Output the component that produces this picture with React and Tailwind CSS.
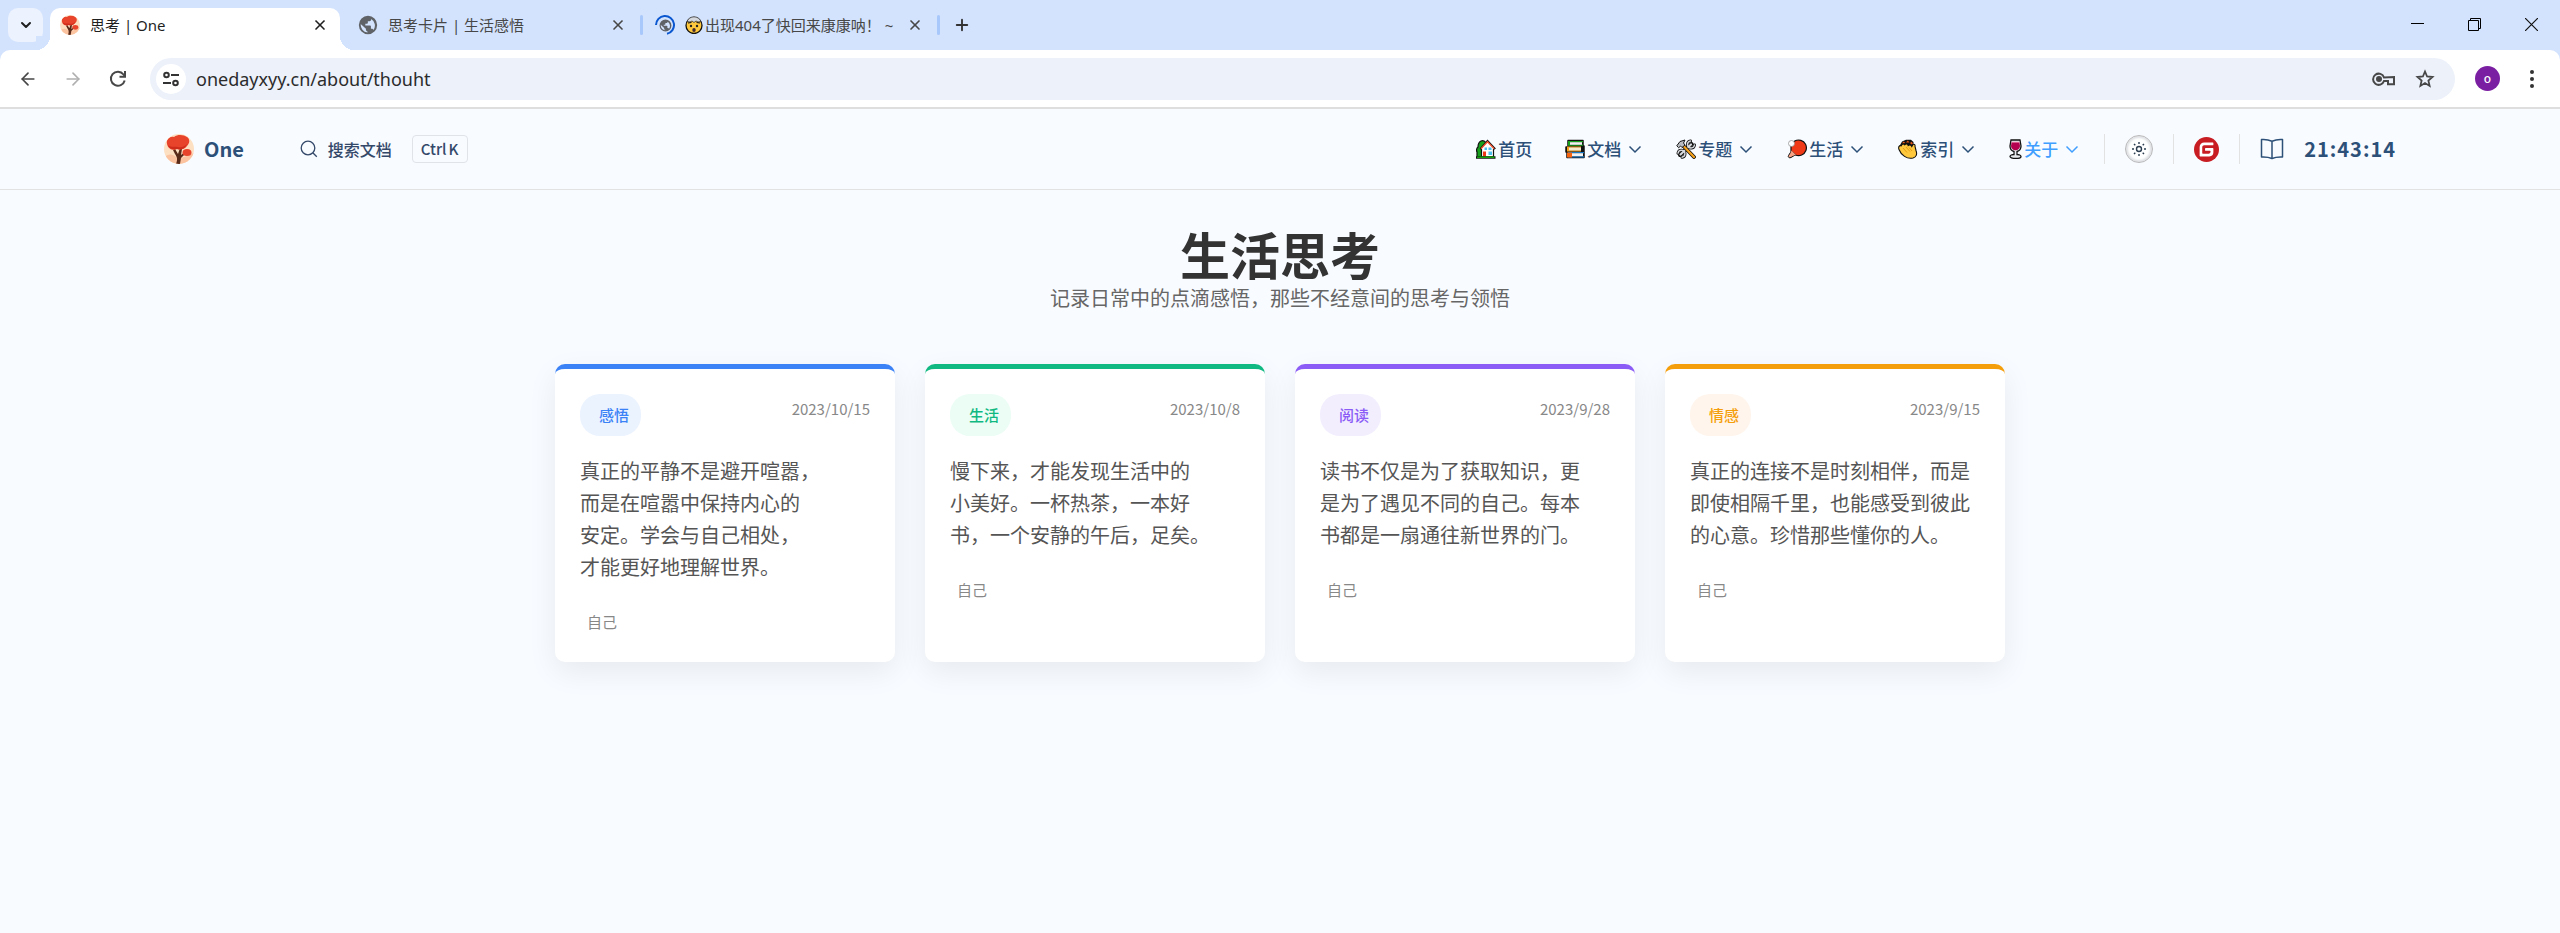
import { ArrowLeft, ArrowRight, ChevronDown, Plus, X } from 'lucide-react';

const NAV = [
  { label: '首页', icon: HouseIcon, menu: false },
  { label: '文档', icon: BooksIcon, menu: true },
  { label: '专题', icon: ToolsIcon, menu: true },
  { label: '生活', icon: PaddleIcon, menu: true },
  { label: '索引', icon: ClapIcon, menu: true },
  { label: '关于', icon: WineIcon, menu: true, active: true },
];

const CARDS = [
  {
    tag: '感悟',
    date: '2023/10/15',
    lines: ['真正的平静不是避开喧嚣，', '而是在喧嚣中保持内心的', '安定。学会与自己相处，', '才能更好地理解世界。'],
    border: 'border-t-[#3b82f6]',
    pill: 'bg-[#ebf3ff] text-[#3b82f6]',
  },
  {
    tag: '生活',
    date: '2023/10/8',
    lines: ['慢下来，才能发现生活中的', '小美好。一杯热茶，一本好', '书，一个安静的午后，足矣。'],
    border: 'border-t-[#10b981]',
    pill: 'bg-[#ebfdf5] text-[#10b981]',
  },
  {
    tag: '阅读',
    date: '2023/9/28',
    lines: ['读书不仅是为了获取知识，更', '是为了遇见不同的自己。每本', '书都是一扇通往新世界的门。'],
    border: 'border-t-[#8b5cf6]',
    pill: 'bg-[#f2eefe] text-[#8b5cf6]',
  },
  {
    tag: '情感',
    date: '2023/9/15',
    lines: ['真正的连接不是时刻相伴，而是', '即使相隔千里，也能感受到彼此', '的心意。珍惜那些懂你的人。'],
    border: 'border-t-[#f59e0b]',
    pill: 'bg-[#fff5ec] text-[#f59e0b]',
  },
];

function TreeLogo({ size }) {
  return (
    <svg width={size} height={size} viewBox="0 0 30 30" aria-hidden="true">
      <clipPath id="tree-clip">
        <circle cx="15" cy="15" r="15" />
      </clipPath>
      <g clipPath="url(#tree-clip)">
        <rect width="30" height="30" fill="#fde0c2" />
        <path d="M0 24c4-5 9-4 12-1s10-1 18-4v11H0z" fill="#fcc3a0" />
        <path d="M12 30c2-5 1-7-1-10l-2-4 2-1 3 5 2-6 2 1-1 6 4-3 1 1-5 5-1 6z" fill="#5a2a18" />
        <path d="M3 10C2 5 6 2 10 3c4-3 10-2 13 0 3 2 3 6 0 9-3 4-7 4-10 3-4 2-9 0-10-5z" fill="#e8432b" />
        <path d="M4 11c3 3 7 1 10 2 4 1 7-1 9-3-2 5-6 6-10 5-4 1-8 0-9-4z" fill="#cf2d1b" />
        <ellipse cx="23" cy="18.500" rx="4.500" ry="3.500" fill="#e8432b" />
      </g>
    </svg>
  );
}

function GlobeIcon({ size }) {
  return (
    <svg width={size} height={size} viewBox="0 0 24 24" fill="#5f6368" aria-hidden="true">
      <path d="M12 1a11 11 0 1 0 0 22 11 11 0 0 0 0-22zM3.500 11l6 5.500v1.300c0 1 .8 1.900 1.900 1.900v1.200A9 9 0 0 1 3.300 11zm15 7c-.3-.9-1-1.500-2-1.500h-1v-3c0-.6-.4-1-1-1H8.800v-2h2c.6 0 1-.5 1-1v-2h2c1 0 2-.9 2-2v-.6A9 9 0 0 1 18.500 18z" />
    </svg>
  );
}

function SpinnerIcon() {
  return (
    <span className="relative flex size-5 items-center justify-center">
      <svg className="absolute inset-0" width="20" height="20" viewBox="0 0 20 20" fill="none" aria-hidden="true">
        <path d="M1 10a9 9 0 1 1 11 8.800" stroke="#0b57d0" strokeWidth="2" />
      </svg>
      <GlobeIcon size={13} />
    </span>
  );
}

function ExplodingHead() {
  return (
    <svg width="18" height="18" viewBox="0 0 18 18" aria-hidden="true">
      <circle cx="9" cy="9.500" r="8" fill="#ffc83d" stroke="#111" strokeWidth="1.300" />
      <path d="M2 5.500C3 2.500 6 .8 9 .8s6 1.700 7 4.700l-3 .5-2-1-2 1.500-2-1.500L5 6z" fill="#d5d8dc" stroke="#333" strokeWidth=".8" />
      <path d="M3 7l3.500-.5M15 7l-3.500-.5" stroke="#111" strokeWidth="1.200" />
      <circle cx="6" cy="10" r="1.200" fill="#222" />
      <circle cx="12" cy="10" r="1.200" fill="#222" />
      <ellipse cx="9" cy="14" rx="1.700" ry="2" fill="#402a32" />
    </svg>
  );
}

function HouseIcon() {
  return (
    <svg width="20" height="20" viewBox="0 0 20 20" aria-hidden="true">
      <path d="M1 18v-5c-1-2 0-4 1-5 0-3 1-5 3-6 2-.6 4 0 5 2v14z" fill="#16a01c" stroke="#111" strokeWidth="1.200" />
      <path d="M4.500 9.500l7-8 7.500 8-1.500 1V18h-12v-7.500z" fill="#fff" stroke="#111" strokeWidth="1.200" />
      <path d="M5 9.800l6.500-7 6.700 7" fill="none" stroke="#f0502e" strokeWidth="1.300" />
      <path d="M12.500 8.500h3v2.500h-3zM12.500 12.500h3.500v3.500h-3.500zM8.500 8.500h2.500v2.500H8.500z" fill="#4cc2f1" />
      <path d="M7 12.500h3V18H7z" fill="#f03a17" />
      <path d="M0 18.500h19.500" stroke="#111" strokeWidth="2.500" />
      <path d="M1 18.200h17.500" stroke="#16c60c" strokeWidth="1.200" />
    </svg>
  );
}

function BooksIcon() {
  return (
    <svg width="20" height="20" viewBox="0 0 20 20" aria-hidden="true">
      <path d="M3 1.500h15v5.500h1V18.500H2V13H1V8h2z" fill="#111" stroke="#111" strokeWidth="1.500" strokeLinejoin="round" />
      <path d="M3 2h15v1.200H5v2.300h13v1.300H3z" fill="#16a01c" />
      <path d="M5 3.200H17v2.600H5z" fill="#f2f2f2" />
      <path d="M2 7.500h14v1.200H4v2.500h12v1.200H2z" fill="#f7a21b" />
      <path d="M4 8.500h12v3H4z" fill="#f4ead2" />
      <path d="M3 13h16v1.200H6v3h13v1.300H3z" fill="#1479c9" />
      <path d="M7 14.200h11v3H7z" fill="#f2f2f2" />
      <path d="M2 13.500h5v5H2z" fill="#f7630c" />
    </svg>
  );
}

function ToolsIcon() {
  return (
    <svg width="20" height="20" viewBox="0 0 20 20" fill="none" strokeLinecap="round" aria-hidden="true">
      <path d="M4 16L15.500 5" stroke="#111" strokeWidth="4" />
      <path d="M14.500 2a3.500 3.500 0 1 0 4 4M2 14.200a3.500 3.500 0 1 1 4 4" stroke="#111" strokeWidth="3" />
      <path d="M14.500 2a3.500 3.500 0 1 0 4 4M2 14.200a3.500 3.500 0 1 1 4 4" stroke="#d5d8dc" strokeWidth="1.400" />
      <path d="M4.500 15.500L15 5.500" stroke="#d5d8dc" strokeWidth="2.200" />
      <path d="M7 6.500l11 11.500" stroke="#111" strokeWidth="3.800" />
      <path d="M8 7.500l10 10.500" stroke="#f7a21b" strokeWidth="2.200" />
      <path d="M1 6.500l3-4 5-1.500-1.500 3 1.500 2-3 2.500-1.500-1.500L3 8.500z" fill="#b9bdc2" stroke="#111" />
    </svg>
  );
}

function PaddleIcon() {
  return (
    <svg width="20" height="20" viewBox="0 0 20 20" aria-hidden="true">
      <path d="M5 11l4 4.500-5 3c-1.500 1-3.500-.5-2.500-2z" fill="#f7a284" stroke="#111" />
      <path d="M4 7a7.800 7.800 0 1 1 4.500 9L4 12z" fill="#f03a17" stroke="#111" strokeWidth="1.200" />
      <path d="M4.500 11.500l4.500 4.500-3 .5-2.500-2.500z" fill="#f7a284" />
      <circle cx="4.500" cy="4.500" r="3" fill="#fff" stroke="#888" strokeWidth=".7" />
    </svg>
  );
}

function ClapIcon() {
  return (
    <svg width="20" height="20" viewBox="0 0 20 20" aria-hidden="true">
      <path d="M1.500 7L4 2.500 8 .8h5L15.500 3v4l-5 1z" fill="#111" />
      <path d="M4 4.500l1.500-2 2 1.500zM8 3.500l1.800-2 1.700 2zM12 4l1.500-1.200L15 4.500l-1.500 1z" fill="#e3591c" />
      <path d="M1 10.500C0 8 1.500 6 3.200 6.800 3.500 5 5.500 4.500 6.800 5.800 7.500 4.500 9.800 4.800 10.200 6.500c1.300-1 3-.5 3.600 1L15 5.500c1.500-.7 2.300.5 2 2l1 4c1.500 4 .2 6.500-3 7.500-6 1.500-12-3-14-8.500z" fill="#ffc83d" stroke="#111" strokeWidth="1.100" />
      <path d="M5 9l4 4.500M8 8l4 4.500M11 8.500l3 3.500" stroke="#e39d14" fill="none" />
    </svg>
  );
}

function WineIcon() {
  return (
    <svg width="13" height="20" viewBox="0 0 13 20" aria-hidden="true">
      <path d="M2 1h9l1 6c0 3-2 5-4 5.500V15.500c2 0 4 1 4 2s-2 2-5.500 2-5.500-1-5.500-2 2-2 4-2V12.500C3 12 1 10 1 7z" fill="#e8ebee" stroke="#111" strokeWidth="1.300" />
      <path d="M2.500 3.500h8l.5 3.500c0 2.500-2 4.300-4.500 4.300S2 9.500 2 7z" fill="#b4004e" />
      <path d="M2.700 3.300h7.600" stroke="#e0568a" strokeWidth="1" />
    </svg>
  );
}

function Tab({ icon, title, active }) {
  return (
    <div className={active ? 'relative flex h-[42px] w-[290px] items-center rounded-t-[10px] bg-white px-2.5 pb-2 text-[#1f1f1f]' : 'flex h-[42px] w-[290px] items-center px-2.5 pb-2 text-[#474747]'}>
      {active && (
        <>
          <span className="absolute bottom-0 -left-3.5 size-3.5 bg-[radial-gradient(circle_at_0_0,#d3e3fd_14px,#fff_14px)]" />
          <span className="absolute bottom-0 -right-3.5 size-3.5 bg-[radial-gradient(circle_at_100%_0,#d3e3fd_14px,#fff_14px)]" />
        </>
      )}
      <span className="flex size-5 shrink-0 items-center justify-center">{icon}</span>
      <span className="ml-2.5 flex flex-1 items-center text-[15px] leading-5 whitespace-nowrap">{title}</span>
      <button type="button" aria-label="关闭" className="flex size-5 shrink-0 items-center justify-center">
        <X size={16} strokeWidth={2.5} />
      </button>
    </div>
  );
}

function Browser() {
  return (
    <div className="bg-[#d3e3fd] font-['Noto_Sans','Noto_Sans_CJK_SC',sans-serif]">
      <div className="flex h-[50px] items-end">
        <button type="button" aria-label="搜索标签页" className="mb-2 ml-2 flex h-[34px] w-[35px] items-center justify-center rounded-[10px] bg-[#ecf2fe] text-[#1f1f1f]">
          <ChevronDown size={16} strokeWidth={3} />
        </button>
        <div className="ml-[7px] flex items-end">
          <Tab active icon={<TreeLogo size={20} />} title="思考 | One" />
          <span className="w-2" />
          <Tab icon={<GlobeIcon size={20} />} title="思考卡片 | 生活感悟" />
          <span className="mx-[2px] mb-[15px] h-5 w-[3px] rounded bg-[#a8c7fa]" />
          <Tab
            icon={<SpinnerIcon />}
            title={
              <>
                <ExplodingHead />
                <span className="ml-[2px]">出现404了快回来康康呐！ ~</span>
              </>
            }
          />
          <span className="mx-[2px] mb-[15px] h-5 w-[3px] rounded bg-[#a8c7fa]" />
          <button type="button" aria-label="新标签页" className="mb-[15px] ml-2.5 flex size-5 items-center justify-center text-[#333]">
            <Plus size={18} strokeWidth={2.5} />
          </button>
        </div>
        <div className="mr-[22px] mb-[19px] ml-auto flex items-center gap-11">
          <button type="button" aria-label="最小化">
            <svg width="13" height="13" fill="none" stroke="#000"><path d="M0 5.500h13" /></svg>
          </button>
          <button type="button" aria-label="还原">
            <svg width="13" height="13" fill="none" stroke="#000"><path d="M.5 2.500h10v10H.5zM2.500 2.500v-2h10v10h-2" /></svg>
          </button>
          <button type="button" aria-label="关闭窗口">
            <svg width="13" height="13" fill="none" stroke="#111" strokeWidth="1.200"><path d="M0 0l13 13M13 0L0 13" /></svg>
          </button>
        </div>
      </div>

      <div className="flex h-[59px] items-center rounded-t-[10px] border-b-2 border-[#dedede] bg-white pr-5 pl-[18px] text-[#474747]">
        <div className="flex items-center gap-[25px]">
          <button type="button" aria-label="后退"><ArrowLeft size={20} /></button>
          <button type="button" aria-label="前进" className="text-[#b0b0b0]"><ArrowRight size={20} /></button>
          <button type="button" aria-label="刷新">
            <svg width="20" height="20" viewBox="0 0 20 20" fill="none" stroke="currentColor" strokeWidth="2">
              <path d="M16.700 11.500A7 7 0 1 1 15.500 5.500L17 7.500" />
              <path d="M17 2v5.800h-5.500" />
            </svg>
          </button>
        </div>
        <div className="ml-[22px] flex h-[42px] flex-1 items-center rounded-full bg-[#ecf1fa] pr-5 pl-1.5">
          <span className="flex size-[30px] items-center justify-center rounded-full bg-white">
            <svg width="16" height="16" viewBox="0 0 16 16" fill="none" stroke="#333" strokeWidth="2" aria-hidden="true">
              <circle cx="3.500" cy="4" r="2.300" />
              <path d="M8 4h8M0 12h8" />
              <circle cx="12.500" cy="12" r="2.300" />
            </svg>
          </span>
          <input aria-label="地址" defaultValue="onedayxyy.cn/about/thouht" className="ml-2.5 h-8 flex-1 bg-transparent text-lg text-[#2b2b2b] outline-none" />
          <svg width="24" height="16" viewBox="0 0 24 16" fill="none" stroke="#474747" strokeWidth="2" aria-label="密码">
            <path d="M12 6.500A5.600 5.600 0 1 0 12 10h4v3.200h6V6z" />
            <circle cx="7" cy="8" r="2" fill="#474747" />
          </svg>
          <svg className="ml-[19px]" width="20" height="20" viewBox="0 0 20 20" fill="none" stroke="#474747" strokeWidth="1.800" aria-label="收藏">
            <path d="M10 2.500l2.100 5 5.400.5-4.100 3.600 1.200 5.300L10 14l-4.600 2.900 1.200-5.300L2.500 8l5.400-.5z" />
          </svg>
        </div>
        <button type="button" className="ml-5 flex size-[25px] items-center justify-center rounded-full bg-[#7b1fa2] text-[12px] leading-none font-medium text-white">o</button>
        <button type="button" aria-label="菜单" className="ml-6">
          <svg width="16" height="20" viewBox="0 0 16 20" fill="#333">
            <circle cx="8" cy="3" r="2" />
            <circle cx="8" cy="10" r="2" />
            <circle cx="8" cy="17" r="2" />
          </svg>
        </button>
      </div>
    </div>
  );
}

function SiteHeader() {
  return (
    <header className="border-b border-[#e2e2e3]">
      <div className="mx-auto flex h-20 w-full max-w-[2232px] items-center text-[#2c5078]">
        <a href="#home" className="flex items-center gap-2.5 text-xl font-bold">
          <TreeLogo size={30} />
          One
        </a>
        <button type="button" className="ml-14 flex items-center text-base font-medium text-[#34496a]">
          <svg width="18" height="18" viewBox="0 0 18 18" fill="none" stroke="currentColor" strokeWidth="1.300" aria-hidden="true">
            <circle cx="8" cy="8" r="6.800" />
            <path d="M12.800 12.800l4 4" />
          </svg>
          <span className="ml-2.5">搜索文档</span>
          <span className="ml-5 flex h-7 items-center gap-[2px] rounded border border-[#e0e3e8] px-2 text-[15px]">
            <span>Ctrl</span>
            <span>K</span>
          </span>
        </button>

        <nav className="ml-auto flex items-center gap-[33px] text-[17px] font-medium">
          {NAV.map(({ label, icon: Icon, menu, active }) => {
            const cls = active ? 'flex items-center text-[#409eff]' : 'flex items-center';
            if (!menu) {
              return (
                <a key={label} href="#home" className={cls}>
                  <Icon />
                  <span className="ml-[2px]">{label}</span>
                </a>
              );
            }
            return (
              <button key={label} type="button" className={cls}>
                <Icon />
                <span className="ml-[2px]">{label}</span>
                <svg className="ml-1.5" width="16" height="16" viewBox="0 0 16 16" fill="none" stroke="currentColor" strokeWidth="1.500" aria-hidden="true">
                  <path d="M2.500 5.500L8 11l5.500-5.500" />
                </svg>
              </button>
            );
          })}
        </nav>

        <span className="ml-6 h-[30px] w-px bg-[#e2e2e3]" />
        <button type="button" aria-label="切换主题" className="ml-5 flex size-7 items-center justify-center rounded-full border border-[#b8b8ba] bg-white shadow-[inset_0_0_2px_2px_#dfe1e4]">
          <svg width="14" height="14" viewBox="0 0 14 14" fill="none" stroke="#2c3e50" strokeWidth="1.400">
            <circle cx="7" cy="7" r="2.500" />
            <path d="M7 0v2M7 12v2M0 7h2M12 7h2M2 2l1.300 1.300M10.700 10.700L12 12M2 12l1.300-1.300M10.700 3.300L12 2" />
          </svg>
        </button>
        <span className="ml-5 h-[30px] w-px bg-[#e2e2e3]" />
        <a href="#gitee" aria-label="Gitee" className="ml-5">
          <svg width="25" height="25" viewBox="0 0 24 24">
            <circle cx="12" cy="12" r="12" fill="#c71d23" />
            <path d="M18.100 5.300H9.800a4.400 4.400 0 0 0-4.400 4.400v8.300c0 .3.300.6.600.6h8.700a3.900 3.900 0 0 0 3.900-3.900v-3.500a.6.6 0 0 0-.6-.6h-6.800a.6.600 0 0 0-.6.600v1.500c0 .3.300.6.600.6h4.100c.3 0 .6.300.6.600v.3c0 1-.8 1.800-1.800 1.800H8.500a.6.6 0 0 1-.6-.6V9.800c0-1 .8-1.800 1.800-1.800h8.300c.3 0 .6-.3.600-.6V5.900c0-.3-.2-.6-.5-.6z" fill="#fff" />
          </svg>
        </a>
        <span className="ml-5 h-[30px] w-px bg-[#e2e2e3]" />
        <button type="button" aria-label="阅读模式" className="ml-5">
          <svg width="24" height="22" viewBox="0 0 24 22" fill="none" stroke="currentColor" strokeWidth="1.500" strokeLinejoin="round">
            <path d="M12 3.200C9 1.800 5 1.200 1.500 1.500v17.500c3.500-.2 7.500.2 10.500 1.500 3-1.300 7-1.700 10.500-1.500V1.500C19 1.200 15 1.800 12 3.200zM12 3.200v17.300" />
          </svg>
        </button>
        <time className="ml-5 text-xl font-bold tracking-wider">21:43:14</time>
      </div>
    </header>
  );
}

function ThoughtCard({ tag, date, lines, border, pill }) {
  return (
    <article className={`rounded-[10px] border-t-[5px] bg-white p-[25px] shadow-[0_10px_30px_rgba(0,0,0,0.07)] ${border}`}>
      <div className="flex items-start justify-between">
        <span className={`flex h-[42px] items-center rounded-[20px] pr-3 pl-[19px] text-[15px] font-medium ${pill}`}>{tag}</span>
        <time className="text-[15px] leading-[30px] text-[#888]">{date}</time>
      </div>
      <p className="mt-[19px] text-xl leading-8 whitespace-nowrap text-[#555]">
        {lines.map((line) => (
          <span key={line} className="block">{line}</span>
        ))}
      </p>
      <p className="mt-6 pl-[7px] text-[15px] leading-[30px] text-[#888]">自己</p>
    </article>
  );
}

export default function App() {
  return (
    <div lang="zh-CN" className="min-h-screen bg-[#f8fbff] font-['Noto_Sans_CJK_SC',sans-serif]">
      <Browser />
      <SiteHeader />
      <main className="mx-auto max-w-[1450px] pt-[38px] pb-12">
        <h1 className="text-center text-[50px] leading-[50px] font-bold text-[#333]">生活思考</h1>
        <p className="mt-1 text-center text-xl leading-8 text-[#666]">记录日常中的点滴感悟，那些不经意间的思考与领悟</p>
        <div className="mt-[50px] grid grid-cols-4 gap-[30px]">
          {CARDS.map((card) => (
            <ThoughtCard key={card.tag} {...card} />
          ))}
        </div>
      </main>
    </div>
  );
}
